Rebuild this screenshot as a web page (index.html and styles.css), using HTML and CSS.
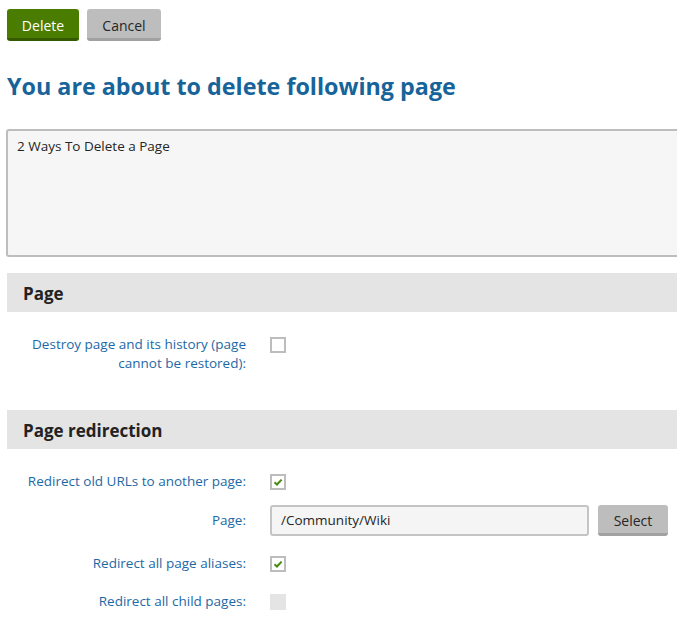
FILE: index.html
```html
<!DOCTYPE html>
<html>
<head>
<meta charset="utf-8">
<link rel="stylesheet" href="styles.css">
</head>
<body>
<div class="page">
  <div class="actions">
    <button class="btn btn-primary">Delete</button>
    <button class="btn btn-default">Cancel</button>
  </div>
  <h1 class="title">You are about to delete following page</h1>
  <div class="doc-list">2 Ways To Delete a Page</div>

  <section class="section">
    <h2 class="section-head">Page</h2>
    <div class="section-body">
      <div class="row row-top">
        <label class="label">Destroy page and its history (page cannot be restored):</label>
        <div class="control"><span class="check"></span></div>
      </div>
    </div>
  </section>

  <section class="section section-second">
    <h2 class="section-head">Page redirection</h2>
    <div class="section-body">
      <div class="row">
        <label class="label">Redirect old URLs to another page:</label>
        <div class="control"><span class="check checked"><svg viewBox="0 0 12 12" width="12" height="12"><path d="M2.5 6.2 L5 8.5 L9.6 3.6" fill="none" stroke="#4a8a12" stroke-width="2"/></svg></span></div>
      </div>
      <div class="row row-input">
        <label class="label">Page:</label>
        <div class="control control-input">
          <div class="text-input">/Community/Wiki</div>
          <button class="btn btn-default btn-select">Select</button>
        </div>
      </div>
      <div class="row">
        <label class="label">Redirect all page aliases:</label>
        <div class="control"><span class="check checked"><svg viewBox="0 0 12 12" width="12" height="12"><path d="M2.5 6.2 L5 8.5 L9.6 3.6" fill="none" stroke="#4a8a12" stroke-width="2"/></svg></span></div>
      </div>
      <div class="row">
        <label class="label">Redirect all child pages:</label>
        <div class="control"><span class="check disabled"></span></div>
      </div>
    </div>
  </section>
</div>
</body>
</html>
```
FILE: styles.css
```css
html, body {
  margin: 0;
  padding: 0;
  background: #ffffff;
  overflow: hidden;
}
body {
  font-family: "Open Sans", "Noto Sans", sans-serif;
  font-size: 13px;
  color: #262626;
}
.page {
  padding: 9px 0 0 7px;
}
.actions {
  display: flex;
  gap: 8px;
}
.btn {
  font-family: inherit;
  font-size: 14px;
  border: 0;
  border-radius: 3px;
  height: 32px;
  padding: 3px 0 0 0;
  cursor: pointer;
}
.btn-primary {
  width: 72px;
  background: #4a7c00;
  color: #ffffff;
  border-bottom: 3px solid #355a00;
}
.btn-default {
  width: 74px;
  background: #bdbdbd;
  color: #262626;
  border-bottom: 3px solid #a1a1a1;
}
.title {
  margin: 29px 0 0 0;
  font-size: 23.3px;
  line-height: 32px;
  font-weight: 700;
  color: #17649a;
}
.doc-list {
  margin: 27px 0 0 -1px;
  height: 128px;
  box-sizing: border-box;
  border: 2px solid #bdbdbd;
  border-right: 0;
  border-radius: 3px 0 0 3px;
  background: #f6f6f6;
  padding: 6px 9px;
  font-size: 13.5px;
  line-height: 19px;
}
.section {
  margin-top: 16px;
}
.section-second {
  margin-top: 27px;
}
.section-head {
  margin: 0;
  height: 39px;
  box-sizing: border-box;
  padding: 2px 0 0 16px;
  line-height: 37px;
  background: #e4e4e4;
  font-size: 17px;
  font-weight: 700;
  color: #222222;
}
.section-body {
  padding-top: 14px;
}
.row {
  display: grid;
  grid-template-columns: 239px 1fr;
  column-gap: 24px;
  align-items: center;
  padding: 9px 0 10px;
  line-height: 19px;
}
.row-top {
  align-items: start;
}
.row-input {
  padding: 4px 0;
  margin-bottom: 5px;
}
.label {
  text-align: right;
  color: #1d69a6;
  font-size: 13.5px;
}
.control {
  display: flex;
  align-items: center;
  height: 19px;
}
.control-input {
  height: 31px;
  gap: 9px;
}
.check {
  box-sizing: border-box;
  width: 16px;
  height: 16px;
  border: 2px solid #bdbdbd;
  background: #ffffff;
  display: inline-flex;
  align-items: center;
  justify-content: center;
}
.check.disabled {
  background: #e4e4e4;
  border-color: #e4e4e4;
}
.text-input {
  box-sizing: border-box;
  width: 319px;
  height: 31px;
  border: 2px solid #c4c4c4;
  border-radius: 3px;
  background: #f5f5f5;
  padding: 0 9px;
  line-height: 27px;
  font-size: 13.5px;
  color: #262626;
}
.btn-select {
  width: 70px;
  height: 31px;
}
```
